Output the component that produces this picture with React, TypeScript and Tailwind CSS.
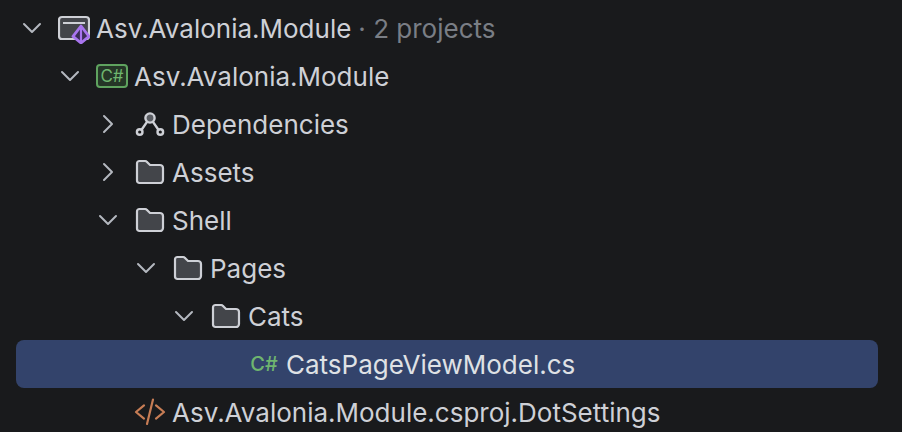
const indents = ["pl-0", "pl-[38px]", "pl-[76px]", "pl-[114px]", "pl-[152px]", "pl-[190px]"];

function Chevron({ open }: { open: boolean }) {
  return (
    <svg width="32" height="32" viewBox="0 0 16 16" fill="none" stroke="#b4b8bf" strokeWidth="1" strokeLinecap="round" strokeLinejoin="round">
      {open ? <path d="M4 6 8 10 12 6" /> : <path d="M6 4 10 8 6 12" />}
    </svg>
  );
}

function FolderIcon() {
  return (
    <svg width="32" height="32" viewBox="0 0 16 16" fill="none">
      <path
        d="M2.700 2.500h2.900c.3 0 .6.1.8.4L8 4.500h5c.8 0 1.500.7 1.500 1.500v6c0 .8-.7 1.500-1.500 1.500H2.700c-.7 0-1.200-.5-1.200-1.200V3.700c0-.7.5-1.200 1.200-1.200z"
        fill="#43454a"
        stroke="#ced0d6"
        strokeWidth="1.100"
      />
    </svg>
  );
}

function DependenciesIcon() {
  return (
    <svg width="32" height="32" viewBox="0 0 16 16" fill="none" stroke="#ced0d6" strokeWidth="1.200">
      <circle cx="8" cy="5" r="2.300" fill="#5a5d63" />
      <circle cx="2.850" cy="12" r="1.400" />
      <circle cx="13.150" cy="12" r="1.400" />
      <path d="M6.600 6.800 3.800 10.900M9.400 6.800 12.200 10.900" />
    </svg>
  );
}

function SolutionIcon() {
  return (
    <svg width="32" height="32" viewBox="0 0 16 16" fill="none">
      <rect x="0.5" y="2.5" width="15" height="11" rx="1.500" fill="#43454a" stroke="#ced0d6" strokeWidth="1.100" />
      <path d="M2.500 5.500h11" stroke="#ced0d6" strokeWidth="1" />
      <path d="M11.500 7 15.500 12.200 11.500 15.500 7.500 12.200z" fill="#3a2d55" stroke="#a875ee" strokeWidth="1.400" strokeLinejoin="round" />
      <path d="M11.500 7.500v7.500" stroke="#a875ee" strokeWidth="1.100" />
    </svg>
  );
}

function ProjectIcon() {
  return (
    <div className="flex h-6 w-8 items-center justify-center rounded-[4px] border-2 border-[#5fa35f] bg-[#253627] text-[17px] leading-none text-[#6fb56f]">
      C#
    </div>
  );
}

function CodeIcon() {
  return (
    <svg width="32" height="32" viewBox="0 0 16 16" fill="none" stroke="#c77d55" strokeWidth="1.100" strokeLinecap="round" strokeLinejoin="round">
      <path d="M5 4.700 1 8l4 3.300M11 4.700 15 8l-4 3.300M9.500 1.800 6.500 14" />
    </svg>
  );
}

type RowProps = {
  level: number;
  chevron?: "open" | "closed";
  icon: React.ReactNode;
  label: string;
  note?: string;
  selected?: boolean;
};

function Row({ level, chevron, icon, label, note, selected }: RowProps) {
  return (
    <div className={`flex h-12 items-center rounded-lg ${indents[level]} ${selected ? "bg-[#33436b] text-[#dfe1e5]" : "text-[#ced0d6]"}`}>
      <div className="flex w-8 shrink-0 justify-center">{chevron && <Chevron open={chevron === "open"} />}</div>
      <div className="ml-[10px] flex w-8 shrink-0 justify-center">{icon}</div>
      <span className="ml-[6px] whitespace-nowrap">{label}</span>
      {note && <span className="ml-[7px] text-[#7a7e85]">{note}</span>}
    </div>
  );
}

export default function App() {
  return (
    <div className="h-[432px] w-[902px] overflow-hidden bg-[#191a1c] pl-4 pr-6 pt-1 font-['Inter',sans-serif] text-[26px]">
      <Row level={0} chevron="open" icon={<SolutionIcon />} label="Asv.Avalonia.Module" note="· 2 projects" />
      <Row level={1} chevron="open" icon={<ProjectIcon />} label="Asv.Avalonia.Module" />
      <Row level={2} chevron="closed" icon={<DependenciesIcon />} label="Dependencies" />
      <Row level={2} chevron="closed" icon={<FolderIcon />} label="Assets" />
      <Row level={2} chevron="open" icon={<FolderIcon />} label="Shell" />
      <Row level={3} chevron="open" icon={<FolderIcon />} label="Pages" />
      <Row level={4} chevron="open" icon={<FolderIcon />} label="Cats" />
      <Row
        level={5}
        icon={<span className="text-[20px] font-medium text-[#6fb56f]">C#</span>}
        label="CatsPageViewModel.cs"
        selected
      />
      <Row level={2} icon={<CodeIcon />} label="Asv.Avalonia.Module.csproj.DotSettings" />
    </div>
  );
}
